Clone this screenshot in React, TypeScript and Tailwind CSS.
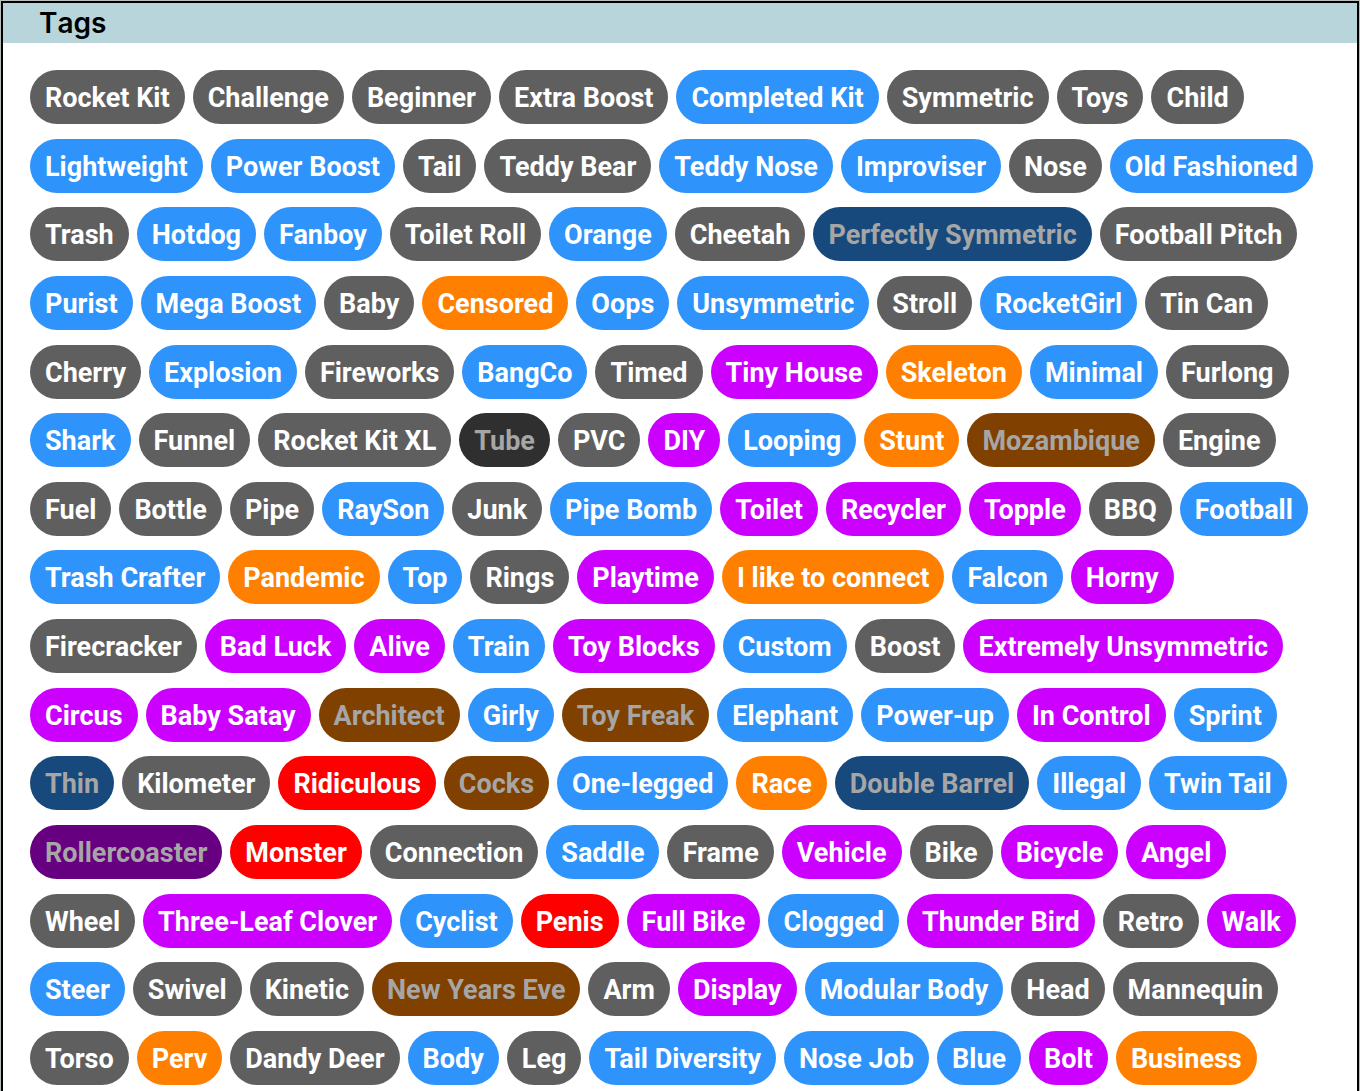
const palette = {
  gray: "bg-[#5f5f5f] text-white",
  blue: "bg-[#2e93fa] text-white",
  purple: "bg-[#cc00ff] text-white",
  orange: "bg-[#ff8000] text-white",
  red: "bg-[#ff0000] text-white",
  dimGray: "bg-[#2f2f2f] text-[#a6a6a6]",
  dimBlue: "bg-[#17497c] text-[#a6a6a6]",
  dimPurple: "bg-[#660080] text-[#a6a6a6]",
  dimOrange: "bg-[#804000] text-[#a6a6a6]",
};

type Tone = keyof typeof palette;

const tags: [string, Tone][] = [
  ["Rocket Kit", "gray"], ["Challenge", "gray"], ["Beginner", "gray"], ["Extra Boost", "gray"], ["Completed Kit", "blue"], ["Symmetric", "gray"], ["Toys", "gray"], ["Child", "gray"],
  ["Lightweight", "blue"], ["Power Boost", "blue"], ["Tail", "gray"], ["Teddy Bear", "gray"], ["Teddy Nose", "blue"], ["Improviser", "blue"], ["Nose", "gray"], ["Old Fashioned", "blue"],
  ["Trash", "gray"], ["Hotdog", "blue"], ["Fanboy", "blue"], ["Toilet Roll", "gray"], ["Orange", "blue"], ["Cheetah", "gray"], ["Perfectly Symmetric", "dimBlue"], ["Football Pitch", "gray"],
  ["Purist", "blue"], ["Mega Boost", "blue"], ["Baby", "gray"], ["Censored", "orange"], ["Oops", "blue"], ["Unsymmetric", "blue"], ["Stroll", "gray"], ["RocketGirl", "blue"], ["Tin Can", "gray"],
  ["Cherry", "gray"], ["Explosion", "blue"], ["Fireworks", "gray"], ["BangCo", "blue"], ["Timed", "gray"], ["Tiny House", "purple"], ["Skeleton", "orange"], ["Minimal", "blue"], ["Furlong", "gray"],
  ["Shark", "blue"], ["Funnel", "gray"], ["Rocket Kit XL", "gray"], ["Tube", "dimGray"], ["PVC", "gray"], ["DIY", "purple"], ["Looping", "blue"], ["Stunt", "orange"], ["Mozambique", "dimOrange"], ["Engine", "gray"],
  ["Fuel", "gray"], ["Bottle", "gray"], ["Pipe", "gray"], ["RaySon", "blue"], ["Junk", "gray"], ["Pipe Bomb", "blue"], ["Toilet", "purple"], ["Recycler", "purple"], ["Topple", "purple"], ["BBQ", "gray"], ["Football", "blue"],
  ["Trash Crafter", "blue"], ["Pandemic", "orange"], ["Top", "blue"], ["Rings", "gray"], ["Playtime", "purple"], ["I like to connect", "orange"], ["Falcon", "blue"], ["Horny", "purple"],
  ["Firecracker", "gray"], ["Bad Luck", "purple"], ["Alive", "purple"], ["Train", "blue"], ["Toy Blocks", "purple"], ["Custom", "blue"], ["Boost", "gray"], ["Extremely Unsymmetric", "purple"],
  ["Circus", "purple"], ["Baby Satay", "purple"], ["Architect", "dimOrange"], ["Girly", "blue"], ["Toy Freak", "dimOrange"], ["Elephant", "blue"], ["Power-up", "blue"], ["In Control", "purple"], ["Sprint", "blue"],
  ["Thin", "dimBlue"], ["Kilometer", "gray"], ["Ridiculous", "red"], ["Cocks", "dimOrange"], ["One-legged", "blue"], ["Race", "orange"], ["Double Barrel", "dimBlue"], ["Illegal", "blue"], ["Twin Tail", "blue"],
  ["Rollercoaster", "dimPurple"], ["Monster", "red"], ["Connection", "gray"], ["Saddle", "blue"], ["Frame", "gray"], ["Vehicle", "purple"], ["Bike", "gray"], ["Bicycle", "purple"], ["Angel", "purple"],
  ["Wheel", "gray"], ["Three-Leaf Clover", "purple"], ["Cyclist", "blue"], ["Penis", "red"], ["Full Bike", "purple"], ["Clogged", "blue"], ["Thunder Bird", "purple"], ["Retro", "gray"], ["Walk", "purple"],
  ["Steer", "blue"], ["Swivel", "gray"], ["Kinetic", "gray"], ["New Years Eve", "dimOrange"], ["Arm", "gray"], ["Display", "purple"], ["Modular Body", "blue"], ["Head", "gray"], ["Mannequin", "gray"],
  ["Torso", "gray"], ["Perv", "orange"], ["Dandy Deer", "gray"], ["Body", "blue"], ["Leg", "gray"], ["Tail Diversity", "blue"], ["Nose Job", "blue"], ["Blue", "blue"], ["Bolt", "purple"], ["Business", "orange"],
];

export default function App() {
  return (
    <div className="flex min-h-screen flex-col bg-[#b7bfbe] px-px pt-px">
      <section className="flex grow flex-col border-x-2 border-t-2 border-black bg-white">
        <h1 className="bg-[#b7d5da] pl-9 font-[Inter,sans-serif] text-[28px]/[40px] font-semibold text-black [font-kerning:none]">
          Tags
        </h1>
        <ul className="flex grow flex-wrap content-between gap-x-2 gap-y-3 px-[27px] pt-[27px] pb-1.5 font-[Roboto,sans-serif] text-[27px]/[52px] font-bold">
          {tags.map(([label, tone]) => (
            <li key={label} className={`rounded-full px-[15px] pt-0.5 ${palette[tone]}`}>
              {label}
            </li>
          ))}
        </ul>
      </section>
    </div>
  );
}
